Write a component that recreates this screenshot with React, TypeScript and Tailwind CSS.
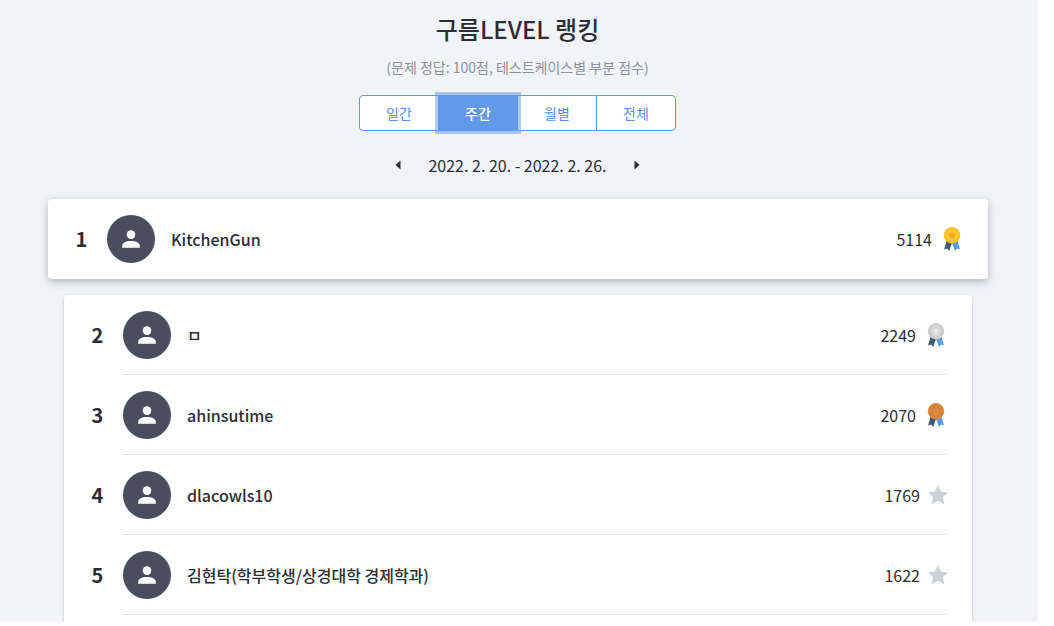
import { useState } from "react";

type Tier = "gold" | "silver" | "bronze";

interface Player {
  rank: number;
  name: string;
  score: number;
  tier?: Tier;
}

const players: Player[] = [
  { rank: 1, name: "KitchenGun", score: 5114, tier: "gold" },
  { rank: 2, name: "ㅁ", score: 2249, tier: "silver" },
  { rank: 3, name: "ahinsutime", score: 2070, tier: "bronze" },
  { rank: 4, name: "dlacowls10", score: 1769 },
  { rank: 5, name: "김현탁(학부학생/상경대학 경제학과)", score: 1622 },
];

const periods = ["일간", "주간", "월별", "전체"];

const medalColors: Record<Tier, { rim: string; face: string; star: string }> = {
  gold: { rim: "#ffc01e", face: "#fdcd2b", star: "#f9a72b" },
  silver: { rim: "#cfcfcf", face: "#d4d4d4", star: "#e6e6e6" },
  bronze: { rim: "#d9843b", face: "#d6833f", star: "#e08c3c" },
};

function Medal({ tier }: { tier: Tier }) {
  const c = medalColors[tier];
  return (
    <svg className="size-6" viewBox="0 0 24 24" aria-hidden="true">
      <path d="M6.5 14 L4 22.4 L7 21.4 L9.3 24 L12 16 Z" fill="#475a6e" />
      <path d="M17.5 14 L20 22.4 L17.2 21.4 L14.9 24 L12 16 Z" fill="#5a9fe4" />
      <circle cx="12" cy="8.2" r="8.2" fill={c.rim} />
      <circle cx="12" cy="8.2" r="5.6" fill={c.face} />
      <path
        d="M12 3.7 L13.4 6.6 L16.5 6.9 L14.1 9.1 L14.8 12.3 L12 10.7 L9.2 12.3 L9.9 9.1 L7.5 6.9 L10.6 6.6 Z"
        fill={c.star}
      />
    </svg>
  );
}

function Star() {
  return (
    <svg className="size-5" viewBox="0 0 20 20" aria-hidden="true">
      <path
        d="M10 1.2 L12.8 7.1 L19.3 7.8 L14.5 12.2 L15.9 18.7 L10 15.4 L4.1 18.7 L5.5 12.2 L0.7 7.8 L7.2 7.1 Z"
        fill="#ccd0d9"
        stroke="#ccd0d9"
        strokeWidth="0.8"
        strokeLinejoin="round"
      />
    </svg>
  );
}

function Avatar() {
  return (
    <span className="flex size-12 shrink-0 items-center justify-center rounded-full bg-[#494e5e]">
      <svg className="size-6" viewBox="0 0 24 24" fill="#fff" aria-hidden="true">
        <circle cx="12" cy="7.6" r="4.3" />
        <path d="M3.2 20.8 V19.2 C3.2 15.8 7 14.1 12 14.1 S20.8 15.8 20.8 19.2 V20.8 Z" />
      </svg>
    </span>
  );
}

function Row({ player, divider }: { player: Player; divider?: boolean }) {
  return (
    <div className="flex h-20 items-stretch px-6">
      <span className="flex w-[35px] shrink-0 items-center pr-4 text-xl font-bold">
        <span className="w-full text-center">{player.rank}</span>
      </span>
      <div
        className={
          divider
            ? "relative flex min-w-0 flex-1 items-center after:absolute after:inset-x-0 after:bottom-0 after:h-px after:bg-[#e1e4eb]"
            : "flex min-w-0 flex-1 items-center"
        }
      >
        <Avatar />
        <span className="ml-4 min-w-0 flex-1 truncate font-medium">{player.name}</span>
        <span className="mr-2">{player.score}</span>
        {player.tier ? <Medal tier={player.tier} /> : <Star />}
      </div>
    </div>
  );
}

export default function App() {
  const [period, setPeriod] = useState("주간");
  return (
    <div className="flex h-screen flex-col bg-white pr-4 pb-1 font-['Noto_Sans_CJK_KR',sans-serif] text-base text-[#2b2d36]">
      <main className="flex-1 overflow-hidden bg-[#f1f3f7] pt-[11px] pr-[50px] pl-12">
        <header className="mr-px flex flex-col items-center">
          <h1 className="text-2xl leading-9 font-medium">구름LEVEL 랭킹</h1>
          <p className="mt-2 text-sm leading-6 text-[#8d919e]">
            (문제 정답: 100점, 테스트케이스별 부분 점수)
          </p>
          <div className="mt-4 flex" role="group" aria-label="기간">
            {periods.map((p) => (
              <button
                key={p}
                type="button"
                aria-pressed={p === period}
                onClick={() => setPeriod(p)}
                className={
                  p === period
                    ? "relative z-10 -ml-px h-9 w-20 border border-[#629aea] bg-[#629aea] text-sm font-medium text-white ring-3 ring-[#629aea]/50 first:ml-0 first:rounded-l last:rounded-r"
                    : "-ml-px h-9 w-20 border border-[#629aea] bg-white text-sm text-[#5590e6] first:ml-0 first:rounded-l last:rounded-r"
                }
              >
                {p}
              </button>
            ))}
          </div>
          <div className="mt-[22px] flex h-6 items-center gap-[18px]">
            <button type="button" aria-label="이전" className="flex size-6 items-center justify-center">
              <svg className="size-4" viewBox="0 0 16 16" aria-hidden="true">
                <path d="M10.5 3.5 V12.5 L5.5 8 Z" fill="#2b2d36" />
              </svg>
            </button>
            <span>2022. 2. 20. - 2022. 2. 26.</span>
            <button type="button" aria-label="다음" className="flex size-6 items-center justify-center">
              <svg className="size-4" viewBox="0 0 16 16" aria-hidden="true">
                <path d="M5.5 3.5 V12.5 L10.5 8 Z" fill="#2b2d36" />
              </svg>
            </button>
          </div>
        </header>
        <section className="mt-[22px] rounded bg-white shadow-[0_3px_8px_rgba(0,0,0,0.25)]">
          <Row player={players[0]} />
        </section>
        <section className="mx-4 mt-4 rounded bg-white pb-20 shadow-[0_1px_3px_rgba(0,0,0,0.2)]">
          {players.slice(1).map((p) => (
            <Row key={p.rank} player={p} divider />
          ))}
        </section>
      </main>
    </div>
  );
}
